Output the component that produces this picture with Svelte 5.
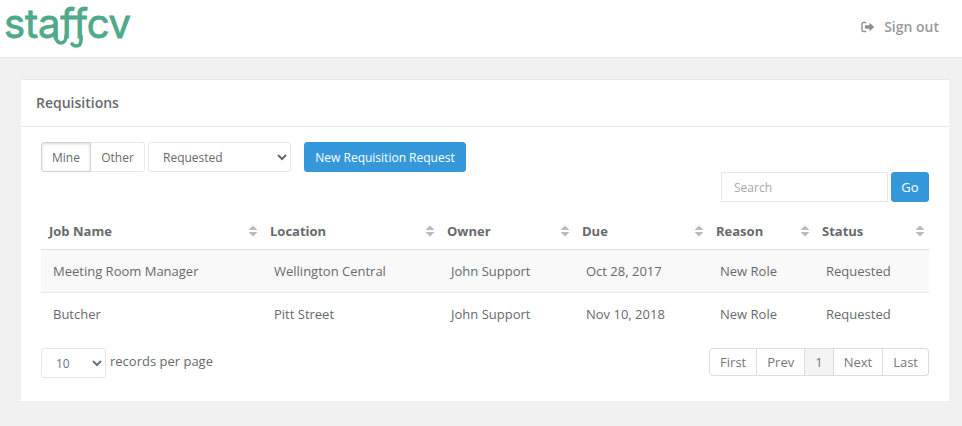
<script>
  const columns = [
    { name: 'Job Name', width: 221 },
    { name: 'Location', width: 177 },
    { name: 'Owner', width: 135 },
    { name: 'Due', width: 134 },
    { name: 'Reason', width: 106 },
    { name: 'Status', width: 115 }
  ];

  const rows = [
    ['Meeting Room Manager', 'Wellington Central', 'John Support', 'Oct 28, 2017', 'New Role', 'Requested'],
    ['Butcher', 'Pitt Street', 'John Support', 'Nov 10, 2018', 'New Role', 'Requested']
  ];

  const pages = ['First', 'Prev', '1', 'Next', 'Last'];
</script>

<header class="topbar">
  <div class="logo">
    staffcv
    <svg class="tails" width="140" height="52" viewBox="0 0 140 52" aria-hidden="true">
      <path d="M55 36c1 4 3 7 6 7 3 0 5-3 5-7" />
      <path d="M81 36v4c0 4-2 6-5 6-2 0-3-1-4-2" />
    </svg>
  </div>
  <a class="signout" href="#signout">
    <svg width="14" height="12" viewBox="0 0 14 12" aria-hidden="true">
      <path d="M5 1.5H2.5A1.5 1.5 0 0 0 1 3v6a1.5 1.5 0 0 0 1.500 1.500H5" fill="none" stroke="#8f8f8f" stroke-width="1.400" />
      <path d="M4 4.300h4.500V1.800L13.300 6 8.500 10.200V7.700H4z" fill="#8f8f8f" />
    </svg>
    <span>Sign out</span>
  </a>
</header>

<main class="page">
  <section class="panel">
    <h1>Requisitions</h1>
    <div class="body">
      <div class="toolbar">
        <div class="toggle">
          <button class="active">Mine</button>
          <button>Other</button>
        </div>
        <select class="status-select">
          <option>Requested</option>
        </select>
        <button class="primary new">New Requisition Request</button>
      </div>

      <div class="search">
        <input type="text" placeholder="Search" />
        <button class="primary">Go</button>
      </div>

      <table>
        <colgroup>
          {#each columns as col}
            <col style="width: {col.width}px" />
          {/each}
        </colgroup>
        <thead>
          <tr>
            {#each columns as col}
              <th>
                <div class="th-inner">
                  {col.name}
                  <svg width="10" height="12" viewBox="0 0 10 12" aria-hidden="true">
                    <path d="M5 0.500L9.500 5H0.500z" fill="#bbb" />
                    <path d="M5 11.500L0.500 7H9.500z" fill="#bbb" />
                  </svg>
                </div>
              </th>
            {/each}
          </tr>
        </thead>
        <tbody>
          {#each rows as row}
            <tr>
              {#each row as cell}
                <td>{cell}</td>
              {/each}
            </tr>
          {/each}
        </tbody>
      </table>

      <div class="footer">
        <div class="per-page">
          <select class="size-select">
            <option>10</option>
          </select>
          <span>records per page</span>
        </div>
        <nav class="pagination">
          {#each pages as page}
            <button class:current={page === '1'}>{page}</button>
          {/each}
        </nav>
      </div>
    </div>
  </section>
</main>

<style>
  :global(body) {
    background: #f1f1f1;
    font-family: "Open Sans", sans-serif;
    font-size: 13px;
    color: #676a6c;
  }

  .topbar {
    height: 57px;
    background: #fff;
    border-bottom: 1px solid #e7e7e7;
    display: flex;
    justify-content: space-between;
    align-items: flex-start;
    padding: 0 23px 0 4px;
  }

  .logo {
    position: relative;
    font-family: Inter, sans-serif;
    font-size: 40px;
    line-height: 47px;
    color: #4fa98b;
    -webkit-text-stroke: 0.8px #4fa98b;
    letter-spacing: -0.2px;
  }

  .tails {
    position: absolute;
    left: -4px;
    top: 0;
    fill: none;
    stroke: #4fa98b;
    stroke-width: 3.6;
    stroke-linecap: round;
  }

  .signout {
    display: flex;
    align-items: center;
    gap: 9px;
    margin-top: 17px;
    color: #999;
    font-size: 14px;
    font-weight: 600;
    text-decoration: none;
    line-height: 19px;
  }

  .page {
    padding: 21px 13px 25px 21px;
  }

  .panel {
    background: #fff;
    border-top: 1px solid #e7e7e7;
  }

  h1 {
    margin: 0;
    height: 46px;
    padding: 0 15px;
    font-size: 14px;
    font-weight: 600;
    line-height: 46px;
    color: #676a6c;
    border-bottom: 1px solid #e7e7e7;
  }

  .body {
    padding: 15px 20px 23px;
  }

  .toolbar {
    display: flex;
    height: 30px;
  }

  button {
    font-family: inherit;
    font-size: 12px;
    color: #676a6c;
    background: #fff;
    border: 1px solid #e7eaec;
    cursor: pointer;
    padding: 0;
  }

  .toggle {
    display: flex;
  }

  .toggle button {
    height: 30px;
    width: 50px;
    border-radius: 3px 0 0 3px;
  }

  .toggle .active {
    border-color: #d2d2d2;
    background: #fff;
    box-shadow: inset 0 1px 3px rgba(0, 0, 0, 0.15);
  }

  .toggle button:last-child {
    width: 54px;
    border-left: none;
    border-radius: 0 3px 3px 0;
  }

  select {
    font-family: inherit;
    font-size: 12px;
    color: #676a6c;
    background: #fff;
    border: 1px solid #e5e6e7;
    border-radius: 3px;
    height: 30px;
  }

  .status-select {
    width: 143px;
    margin-left: 3px;
    padding-left: 10px;
  }

  .primary {
    background: #3498db;
    border: 1px solid #3498db;
    color: #fff;
    border-radius: 3px;
  }

  .new {
    width: 162px;
    margin-left: 13px;
  }

  .search {
    display: flex;
    justify-content: flex-end;
    gap: 3px;
    height: 30px;
  }

  .search input {
    box-sizing: border-box;
    width: 167px;
    height: 30px;
    border: 1px solid #e5e6e7;
    border-radius: 1px;
    padding: 0 12px;
    font-family: inherit;
    font-size: 12px;
    color: #676a6c;
    outline: none;
  }

  .search input::placeholder {
    color: #a9a9a9;
  }

  .search .primary {
    width: 38px;
    font-size: 13px;
  }

  table {
    width: 888px;
    table-layout: fixed;
    border-collapse: collapse;
    margin-top: 10px;
  }

  th {
    height: 37px;
    padding: 0 4px 0 8px;
    text-align: left;
    font-size: 13px;
    font-weight: 700;
    border-bottom: 1px solid #ddd;
  }

  .th-inner {
    display: flex;
    justify-content: space-between;
    align-items: center;
  }

  td {
    height: 42px;
    padding: 0 12px;
    border-bottom: 1px solid #e7e7e7;
    font-size: 13px;
    white-space: nowrap;
  }

  tbody tr:first-child td {
    background: #f9f9f9;
  }

  tbody tr:last-child td {
    border-bottom: none;
  }

  .footer {
    display: flex;
    justify-content: space-between;
    margin-top: 13px;
  }

  .per-page {
    display: flex;
    gap: 4px;
    height: 30px;
  }

  .per-page span {
    line-height: 26px;
  }

  .size-select {
    width: 65px;
    padding-left: 10px;
    color: #68727c;
  }

  .pagination {
    display: flex;
    height: 28px;
  }

  .pagination button {
    height: 28px;
    padding: 0 10px;
    font-size: 13px;
    color: #777;
    border: 1px solid #ddd;
    border-left: none;
  }

  .pagination button:first-child {
    border-left: 1px solid #ddd;
    border-radius: 4px 0 0 4px;
  }

  .pagination button:last-child {
    border-radius: 0 4px 4px 0;
  }

  .pagination .current {
    background: #f4f4f4;
  }
</style>
